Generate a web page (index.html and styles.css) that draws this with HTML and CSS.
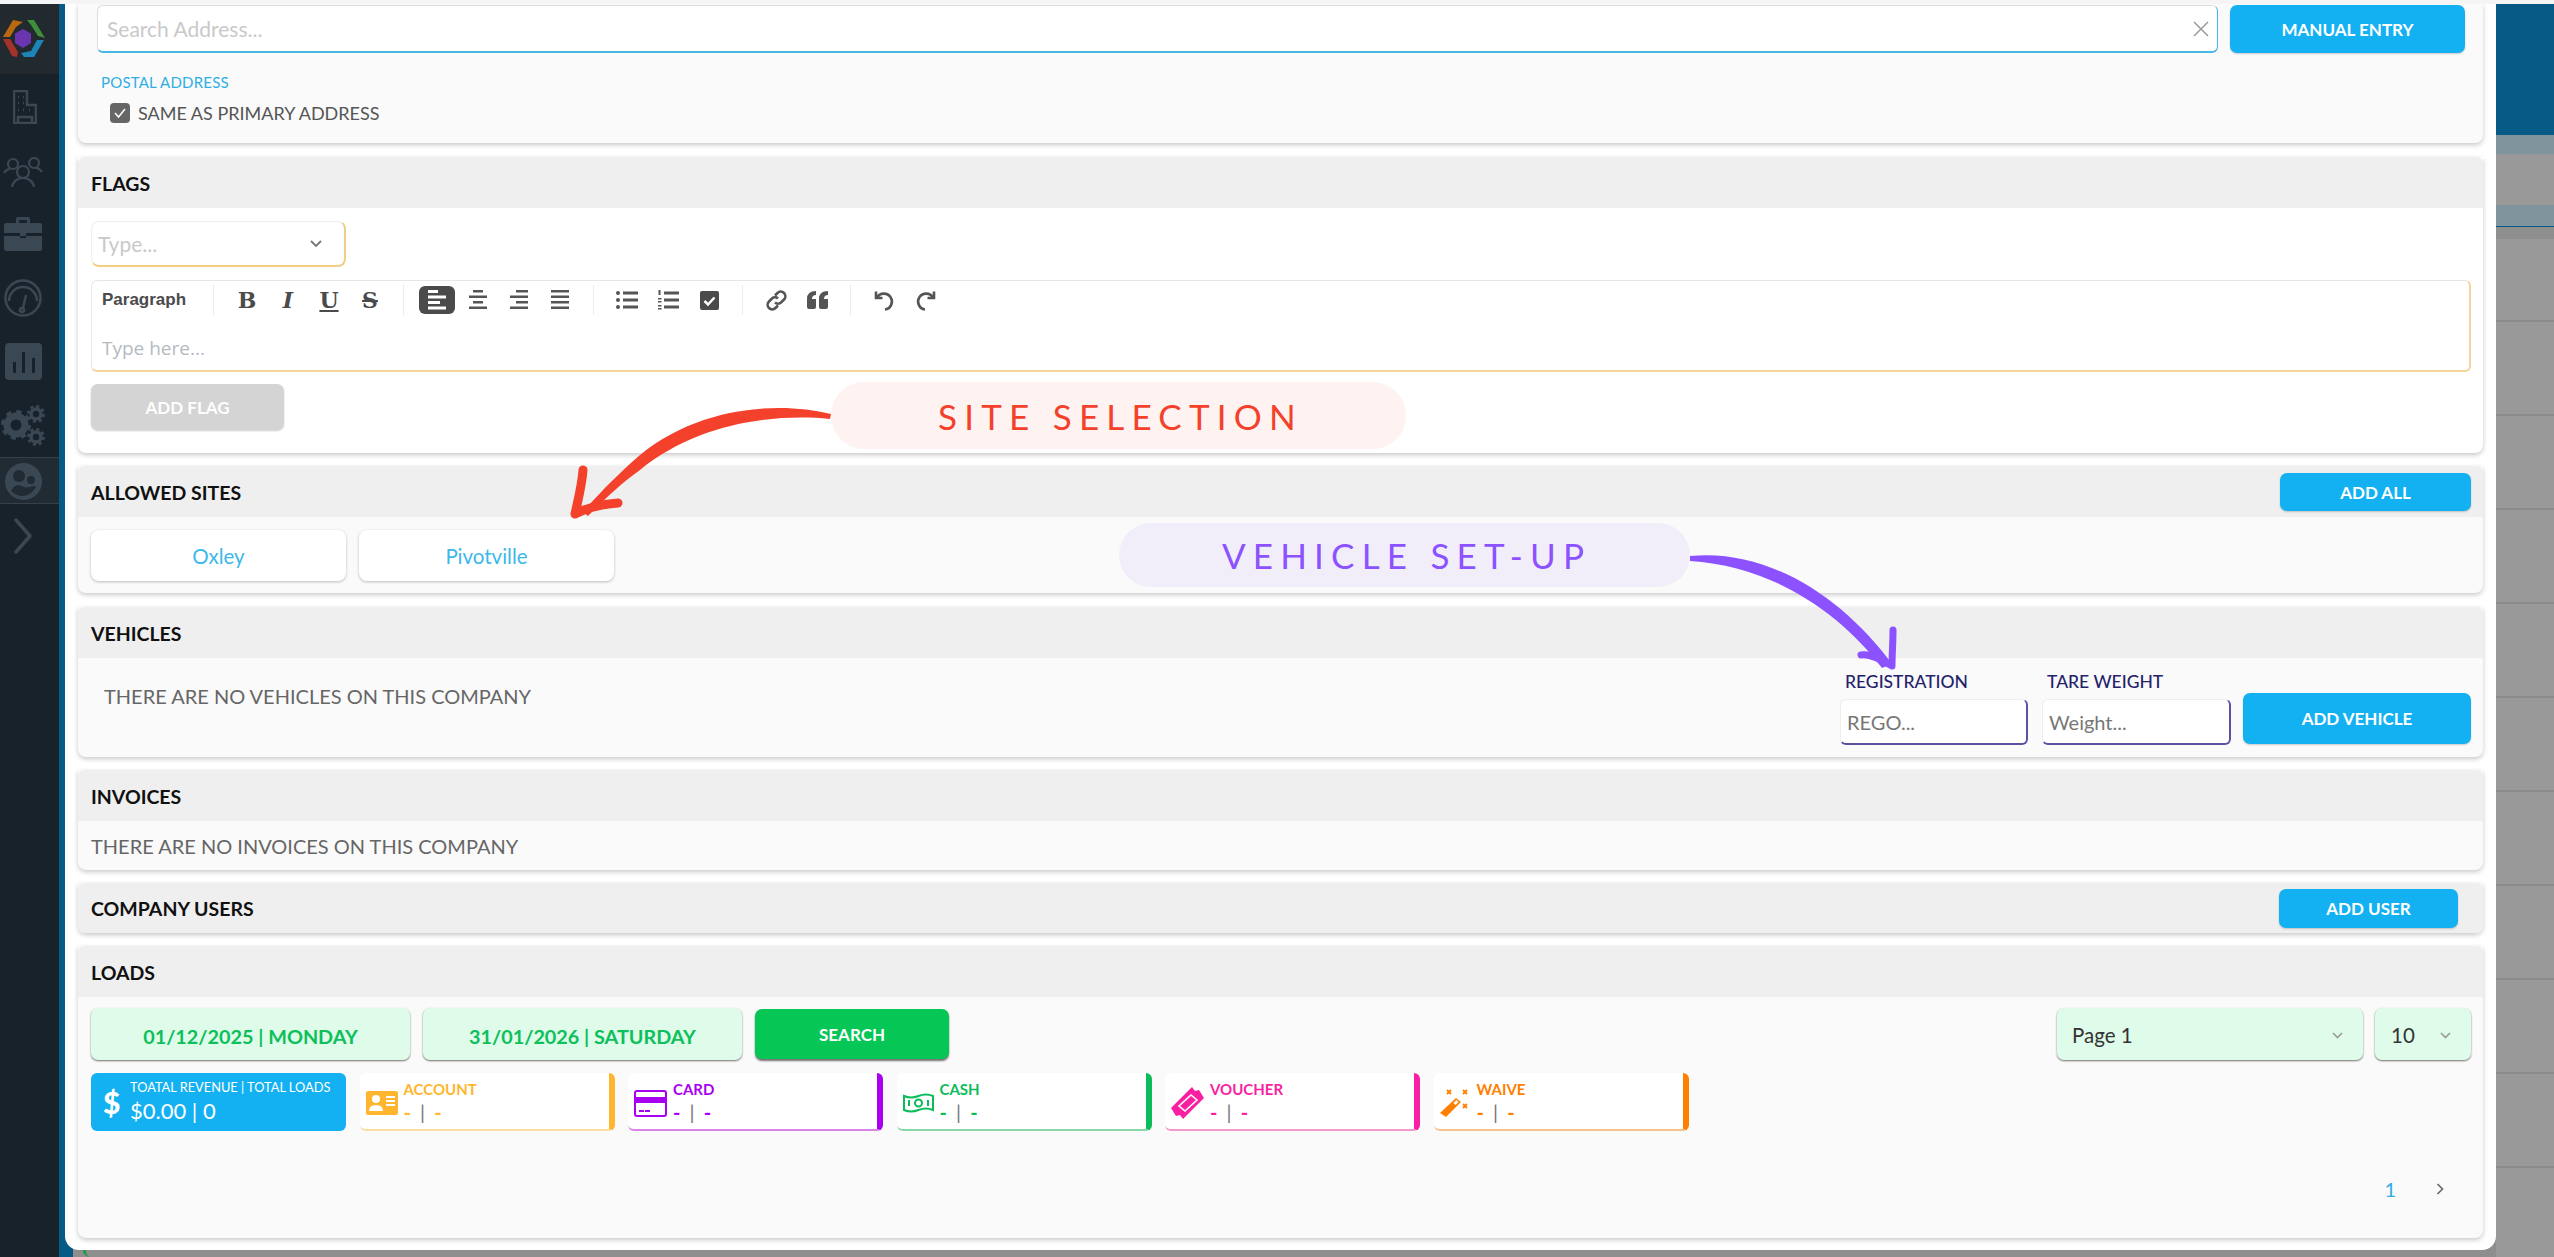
FILE: index.html
```html
<!DOCTYPE html>
<html lang="en">
<head>
  <meta charset="UTF-8" />
  <meta name="viewport" content="width=device-width, initial-scale=1.0"/>
  <title>Company</title>
  <link rel="stylesheet" href="styles.css">
</head>
<body>
  <div class="top-strip"></div>
  <div class="stage">
    <nav class="sidebar">
      <div class="nav-logo">
        <svg width="46" height="40" viewBox="0 0 46 40">
          <polygon points="3,18 13,1 23,3 16,8 10,18" fill="#b8690f"/>
          <polygon points="27,1 34,1 45,19 38,17 31,6" fill="#3f8f3a"/>
          <polygon points="44,21 34,38 24,38 21,34 31,32 37,21" fill="#1c85b5"/>
          <polygon points="3,20 10,20 18,33 17,38 12,37" fill="#a3322a"/>
          <polygon points="23,10 31,14.500 31,24 23,29 15,24 15,14.500" fill="#6b35b0"/>
        </svg>
      </div>
      <div class="nav-item nav-building">
        <svg width="24" height="34" viewBox="0 0 24 34" fill="none" stroke="#3a4854" stroke-width="2.500">
          <path d="M1 33V1h13v14h9v18z"/><path d="M5 33v-6h14v6M5 7h1M10 7h1M5 13h1M10 13h1M5 20h1M10 20h1M16 20h1"/>
        </svg>
      </div>
      <div class="nav-item nav-users">
        <svg width="40" height="30" viewBox="0 0 40 30" fill="none" stroke="#3a4854" stroke-width="2.200">
          <circle cx="10" cy="7" r="5"/><circle cx="31" cy="6" r="5"/><circle cx="20" cy="15" r="6"/>
          <path d="M1 16c2-3 4-4 6-4M39 15c-2-3-4-4-6-4M9 30c1-6 6-9 11-9s10 3 11 9"/>
        </svg>
      </div>
      <div class="nav-item nav-case">
        <svg width="38" height="35" viewBox="0 0 38 35">
          <path d="M12 7V3q0-2 2-2h10q2 0 2 2v4h-3V4h-8v3z" fill="#3a4854"/>
          <path d="M2 7h34q2 0 2 2v8H22v3h-6v-3H0V9q0-2 2-2zM0 20h16v2h6v-2h16v13q0 2-2 2H2q-2 0-2-2z" fill="#3a4854"/>
        </svg>
      </div>
      <div class="nav-item nav-gauge">
        <svg width="38" height="38" viewBox="0 0 38 38" fill="none" stroke="#3a4854" stroke-width="2.500">
          <circle cx="19" cy="19" r="17.500"/><path d="M5 22a14 14 0 0 1 28 0"/><path d="M22 16l-3 13"/><circle cx="18" cy="31" r="2"/>
        </svg>
      </div>
      <div class="nav-item nav-chart">
        <svg width="37" height="37" viewBox="0 0 37 37">
          <path fill-rule="evenodd" d="M4 0h29q4 0 4 4v29q0 4-4 4H4q-4 0-4-4V4q0-4 4-4zM8 19v11h3V19zM17 9v21h3V9zM27 15v15h3V15z" fill="#3a4854"/>
        </svg>
      </div>
      <div class="nav-item nav-gears">
        <svg width="44" height="41" viewBox="0 0 44 41" fill="none" stroke="#3a4854">
          <circle cx="15" cy="20" r="9" stroke-width="7"/>
          <circle cx="15" cy="20" r="13" stroke-width="4" stroke-dasharray="5 5.200"/>
          <circle cx="35" cy="9" r="5" stroke-width="3.500"/>
          <circle cx="35" cy="9" r="7.500" stroke-width="3" stroke-dasharray="3 2.900"/>
          <circle cx="35" cy="32" r="5" stroke-width="3.500"/>
          <circle cx="35" cy="32" r="7.500" stroke-width="3" stroke-dasharray="3 2.900"/>
        </svg>
      </div>
      <div class="nav-item nav-face">
        <svg width="37" height="37" viewBox="0 0 37 37">
          <circle cx="18.500" cy="18.500" r="18.500" fill="#3a4854"/>
          <circle cx="14" cy="13" r="6" fill="#202b33"/><circle cx="26" cy="17" r="4" fill="#202b33"/>
          <path d="M6 28c4-8 9-6 13-4 5 2 8-3 12 0-3 5-8 9-13 9-5 0-9-2-12-5z" fill="#202b33"/>
        </svg>
      </div>
      <div class="nav-item nav-more">
        <svg width="18" height="36" viewBox="0 0 18 36" fill="none" stroke="#3a4854" stroke-width="3.500" stroke-linecap="round" stroke-linejoin="round">
          <path d="M2 2l14 16L2 34"/>
        </svg>
      </div>
    </nav>
    <div class="rail"></div>

    <main class="modal">
      <section class="card card-address">
        <div class="address-row">
          <div class="search-box">
            <span class="placeholder">Search Address...</span>
            <svg width="16" height="16" viewBox="0 0 16 16" stroke="#9b9b9b" stroke-width="1.500"><path d="M1 1l14 14M15 1L1 15"/></svg>
          </div>
          <button class="btn btn-manual">MANUAL ENTRY</button>
        </div>
        <div class="postal-label">POSTAL ADDRESS</div>
        <label class="same-row">
          <span class="checkbox"><svg width="14" height="14" viewBox="0 0 14 14" fill="none" stroke="#fff" stroke-width="1.500"><path d="M2 7l3.500 4L12 3"/></svg></span>
          SAME AS PRIMARY ADDRESS
        </label>
      </section>

      <section class="card card-flags">
        <header class="card-head">FLAGS</header>
        <div class="flags-body">
          <div class="select-type">
            <span class="placeholder">Type...</span>
            <svg width="12" height="8" viewBox="0 0 12 8" fill="none" stroke="#777" stroke-width="1.800"><path d="M1 1l5 5 5-5"/></svg>
          </div>
          <div class="editor">
            <div class="toolbar">
              <span class="para">Paragraph</span>
              <i class="sep"></i>
              <span class="tool glyph-b">B</span>
              <span class="tool glyph-i">I</span>
              <span class="tool glyph-u">U</span>
              <span class="tool glyph-s">S</span>
              <i class="sep"></i>
              <span class="tool tool-on"><svg width="20" height="20" viewBox="0 0 20 20" fill="#fff"><rect x="1" width="10" height="3"/><rect x="1" y="5.500" width="18" height="3"/><rect x="1" y="11" width="12" height="3"/><rect x="1" y="16.500" width="18" height="3"/></svg></span>
              <span class="tool"><svg width="20" height="20" viewBox="0 0 20 20" fill="#555"><rect x="5" width="10" height="2.500"/><rect x="1" y="5.500" width="18" height="2.500"/><rect x="5" y="11" width="10" height="2.500"/><rect x="1" y="16.500" width="18" height="2.500"/></svg></span>
              <span class="tool"><svg width="20" height="20" viewBox="0 0 20 20" fill="#555"><rect x="7" width="12" height="2.500"/><rect x="1" y="5.500" width="18" height="2.500"/><rect x="7" y="11" width="12" height="2.500"/><rect x="1" y="16.500" width="18" height="2.500"/></svg></span>
              <span class="tool"><svg width="20" height="20" viewBox="0 0 20 20" fill="#555"><rect x="1" width="18" height="2.500"/><rect x="1" y="5.500" width="18" height="2.500"/><rect x="1" y="11" width="18" height="2.500"/><rect x="1" y="16.500" width="18" height="2.500"/></svg></span>
              <i class="sep"></i>
              <span class="tool"><svg width="22" height="20" viewBox="0 0 22 20" fill="#555"><circle cx="2" cy="3" r="2"/><circle cx="2" cy="10" r="2"/><circle cx="2" cy="17" r="2"/><rect x="7" y="1.500" width="15" height="3"/><rect x="7" y="8.500" width="15" height="3"/><rect x="7" y="15.500" width="15" height="3"/></svg></span>
              <span class="tool"><svg width="22" height="20" viewBox="0 0 22 20" fill="#555"><rect x="1.500" y="0" width="2" height="5"/><rect x="1" y="8" width="3.500" height="1.500"/><rect x="1" y="11" width="3.500" height="1.500"/><rect x="1" y="15" width="3.500" height="1.500"/><rect x="1" y="18" width="3.500" height="1.500"/><rect x="7" y="1.500" width="15" height="3"/><rect x="7" y="8.500" width="15" height="3"/><rect x="7" y="15.500" width="15" height="3"/></svg></span>
              <span class="tool"><svg width="19" height="19" viewBox="0 0 19 19"><rect width="19" height="19" rx="2" fill="#4b4b4b"/><path d="M4.500 10l3.500 3.500 6.500-7" fill="none" stroke="#fff" stroke-width="2.500"/></svg></span>
              <i class="sep"></i>
              <span class="tool"><svg width="21" height="21" viewBox="0 0 21 21" fill="none" stroke="#555" stroke-width="2.600"><path d="M9 5.500l2.500-2.500a4.500 4.500 0 0 1 6.500 6.500l-3 3a4.500 4.500 0 0 1-6 0"/><path d="M12 15.500L9.500 18A4.500 4.500 0 0 1 3 11.500l3-3a4.500 4.500 0 0 1 6 0"/></svg></span>
              <span class="tool"><svg width="21" height="18" viewBox="0 0 21 18" fill="#555"><path d="M9 0v4Q5 4 5 8h4v8q0 2-2 2H2q-2 0-2-2V8Q0 0 9 0zM21 0v4q-4 0-4 4h4v8q0 2-2 2h-5q-2 0-2-2V8q0-8 9-8z"/></svg></span>
              <i class="sep"></i>
              <span class="tool"><svg width="21" height="21" viewBox="0 0 21 21" fill="none" stroke="#555" stroke-width="2.600"><path d="M2 1.500V8h6.500"/><path d="M3 7.500A8 8 0 1 1 11 19.500"/></svg></span>
              <span class="tool"><svg width="21" height="21" viewBox="0 0 21 21" fill="none" stroke="#555" stroke-width="2.600"><path d="M19 1.500V8h-6.500"/><path d="M18 7.500A8 8 0 1 0 10 19.500"/></svg></span>
            </div>
            <div class="editor-text">Type here...</div>
          </div>
          <button class="btn btn-flag">ADD FLAG</button>
        </div>
      </section>

      <section class="card card-sites">
        <header class="card-head">ALLOWED SITES <button class="btn btn-head">ADD ALL</button></header>
        <div class="sites-body">
          <button class="site">Oxley</button>
          <button class="site">Pivotville</button>
        </div>
      </section>

      <section class="card card-vehicles">
        <header class="card-head">VEHICLES</header>
        <div class="vehicles-body">
          <p class="empty empty-vehicles">THERE ARE NO VEHICLES ON THIS COMPANY</p>
          <div class="vehicle-form">
            <div class="field">
              <label>REGISTRATION</label>
              <div class="input">REGO...</div>
            </div>
            <div class="field">
              <label>TARE WEIGHT</label>
              <div class="input">Weight...</div>
            </div>
            <button class="btn btn-vehicle">ADD VEHICLE</button>
          </div>
        </div>
      </section>

      <section class="card card-invoices">
        <header class="card-head">INVOICES</header>
        <p class="empty empty-invoices">THERE ARE NO INVOICES ON THIS COMPANY</p>
      </section>

      <section class="card card-users">
        <header class="card-head">COMPANY USERS <button class="btn btn-head btn-user">ADD USER</button></header>
      </section>

      <section class="card card-loads">
        <header class="card-head">LOADS</header>
        <div class="loads-body">
          <div class="loads-tools">
            <div class="date">01/12/2025 | MONDAY</div>
            <div class="date">31/01/2026 | SATURDAY</div>
            <button class="btn-search">SEARCH</button>
            <div class="pick pick-page">Page 1 <svg width="11" height="7" viewBox="0 0 11 7" fill="none" stroke="#999" stroke-width="1.600"><path d="M1 1l4.500 4.500L10 1"/></svg></div>
            <div class="pick pick-size">10 <svg width="11" height="7" viewBox="0 0 11 7" fill="none" stroke="#999" stroke-width="1.600"><path d="M1 1l4.500 4.500L10 1"/></svg></div>
          </div>
          <div class="stats">
            <div class="stat stat-total">
              <span class="dollar">$</span>
              <div>
                <div class="stat-label">TOATAL REVENUE | TOTAL LOADS</div>
                <div class="stat-value">$0.00 | 0</div>
              </div>
            </div>
            <div class="stat stat-account">
              <svg width="32" height="24" viewBox="0 0 32 24"><rect width="32" height="24" rx="2" fill="#ffb52e"/><circle cx="10" cy="8" r="4" fill="#fff"/><path d="M3 20q0-6 7-6t7 6z" fill="#fff"/><rect x="20" y="5" width="9" height="2" fill="#fff"/><rect x="20" y="9" width="9" height="2" fill="#fff"/><rect x="20" y="13" width="9" height="2" fill="#fff"/></svg>
              <div><div class="stat-name">ACCOUNT</div><div class="stat-dash"><b>-</b> | <b>-</b></div></div>
            </div>
            <div class="stat stat-card">
              <svg width="33" height="27" viewBox="0 0 33 27"><rect x="1" y="1" width="31" height="25" rx="2" fill="none" stroke="#a800f0" stroke-width="2"/><rect x="1" y="7" width="31" height="6" fill="#a800f0"/><rect x="5" y="20" width="5" height="2" fill="#a800f0"/><rect x="11" y="20" width="5" height="2" fill="#a800f0"/></svg>
              <div><div class="stat-name">CARD</div><div class="stat-dash"><b>-</b> | <b>-</b></div></div>
            </div>
            <div class="stat stat-cash">
              <svg width="31" height="20" viewBox="0 0 31 20" fill="none" stroke="#0bbd5a" stroke-width="2"><path d="M1 3q7 3 14.500 0T30 3v14q-7-3-14.500 0T1 17z"/><circle cx="15.500" cy="10" r="3.500"/><path d="M6 7v6M25 7v6"/></svg>
              <div><div class="stat-name">CASH</div><div class="stat-dash"><b>-</b> | <b>-</b></div></div>
            </div>
            <div class="stat stat-voucher">
              <svg width="33" height="32" viewBox="0 0 33 32"><path d="M21 0l3 4 4-1 5 8-3 3L12 32l-3-4-4 1-5-8 3-3z" fill="#f91fa2"/><path d="M20 8l6 5-12 11-6-5z" fill="#f91fa2" stroke="#fff" stroke-width="1.600"/></svg>
              <div><div class="stat-name">VOUCHER</div><div class="stat-dash"><b>-</b> | <b>-</b></div></div>
            </div>
            <div class="stat stat-waive">
              <svg width="29" height="28" viewBox="0 0 29 28"><path d="M16 9l5 4L6 28 0 24z" fill="#ff7f00"/><path d="M16.500 11l2 2-3 3-2-2z" fill="#fff"/><path d="M7 1l4 4M11 1L7 5M23 1l4 4M27 1l-4 4M23 15l4 4M27 15l-4 4" stroke="#ff7f00" stroke-width="1.800"/></svg>
              <div><div class="stat-name">WAIVE</div><div class="stat-dash"><b>-</b> | <b>-</b></div></div>
            </div>
          </div>
          <div class="pager">
            <span class="pager-num">1</span>
            <svg width="8" height="12" viewBox="0 0 8 12" fill="none" stroke="#666" stroke-width="1.600"><path d="M1.500 1l5 5-5 5"/></svg>
          </div>
        </div>
      </section>
    </main>

    <aside class="backdrop">
      <div class="back-blue"></div>
      <div class="back-tint"></div>
      <div class="back-grey"></div>
      <div class="back-tab"></div>
      <div class="back-shade"></div>
      <div class="back-rows"></div>
    </aside>
  </div>
  <div class="peek"></div>

  <!-- annotations drawn over the screenshot -->
  <div class="note note-site">SITE SELECTION</div>
  <div class="note note-vehicle">VEHICLE SET-UP</div>
  <svg class="arrows" width="2554" height="1257" viewBox="0 0 2554 1257">
    <path d="M831 414C775 400 690 408 632 462C610 482 595 498 583 512L588 516C602 502 620 484 640 470C695 425 770 413 830 419z" fill="#f4412b"/>
    <path d="M583 470C582 485 578 500 575 514C590 506 605 504 618 503" fill="none" stroke="#f4412b" stroke-width="9" stroke-linecap="round" stroke-linejoin="round"/>
    <path d="M1690 556C1770 548 1845 600 1892 664L1882 668C1838 610 1770 566 1690 561z" fill="#8c52ff"/>
    <path d="M1893 630C1893 643 1892 655 1892 666C1882 660 1870 653 1861 655" fill="none" stroke="#8c52ff" stroke-width="7" stroke-linecap="round" stroke-linejoin="round"/>
  </svg>
</body>
</html>
```
FILE: styles.css
```css
* {
  box-sizing: border-box;
}
html, body {
  margin: 0;
  height: 100%;
  overflow: hidden;
}
body {
  position: relative;
  font-family: Lato, "Noto Sans", sans-serif;
  font-size: 20px;
  background: #8e8e8e;
  color: #111;
}
button {
  font-family: inherit;
  border: none;
}
p {
  margin: 0;
}
.top-strip {
  height: 4px;
  background: #f5f5f5;
}
.stage {
  display: flex;
  height: 1253px;
}

/* sidebar */
.sidebar {
  width: 59px;
  flex-shrink: 0;
  background: #18222b;
  display: flex;
  flex-direction: column;
}
.nav-logo {
  height: 70px;
  background: #22292f;
  padding: 15px 0 0 0;
}
.nav-logo svg {
  display: block;
}
.nav-item {
  width: 46px;
  display: flex;
  justify-content: center;
}
.nav-item svg {
  display: block;
}
.nav-building { margin-top: 16px; padding-left: 4px; }
.nav-users { margin-top: 33px; }
.nav-case { margin-top: 29px; }
.nav-gauge { margin-top: 28px; }
.nav-chart { margin-top: 26px; }
.nav-gears { margin-top: 25px; }
.nav-face {
  width: 59px;
  height: 47px;
  margin-top: 11px;
  padding: 5px 13px 0 0;
  background: #202b33;
  border-top: 1px solid #35404a;
  border-bottom: 1px solid #35404a;
}
.nav-more { margin-top: 14px; }
.rail {
  position: relative;
  width: 6px;
  flex-shrink: 0;
  background: #065a85;
}
/* the rail runs on behind the modal's round corner */
.rail::after {
  content: "";
  position: absolute;
  left: 6px;
  bottom: 0;
  width: 8px;
  height: 24px;
  background: #065a85;
  z-index: -1;
}
.peek {
  position: absolute;
  left: 83px;
  top: 1250px;
  width: 8px;
  height: 7px;
  border-left: 3px solid #1c9a4a;
  border-radius: 0 0 0 8px;
}

/* modal */
.modal {
  width: 2431px;
  height: 1246px;
  flex-shrink: 0;
  background: #fff;
  border-radius: 0 0 14px 14px;
  padding: 0 13px;
  display: flex;
  flex-direction: column;
  gap: 13px;
  overflow: hidden;
}
.card {
  flex-shrink: 0;
  background: #fafafa;
  border-radius: 0 0 8px 8px;
  box-shadow: 0 2px 5px rgba(0, 0, 0, 0.22);
}
.card-head {
  height: 51px;
  padding: 1px 12px 0 13px;
  display: flex;
  align-items: center;
  justify-content: space-between;
  background: #efefef;
  font-size: 19.500px;
  font-weight: 700;
  border-radius: 6px 6px 0 0;
}
.btn {
  background: #14b1f2;
  color: #fff;
  font-size: 17px;
  font-weight: 700;
  border-radius: 7px;
  box-shadow: 0 1px 2px rgba(0, 0, 0, 0.2);
}
.placeholder {
  color: #c9c9c9;
}

.card-address {
  height: 139px;
  padding: 1px 18px 0 19px;
}
.address-row {
  display: flex;
  gap: 12px;
}
.search-box {
  flex: 1;
  height: 48px;
  padding: 0 8px 0 9px;
  display: flex;
  align-items: center;
  justify-content: space-between;
  background: #fff;
  border: 1px solid #ddd;
  border-bottom: 2px solid #47b7e6;
  border-right-color: #47b7e6;
  border-radius: 6px;
  font-size: 21px;
}
.btn-manual {
  width: 235px;
  height: 48px;
}
.postal-label {
  margin: 19px 0 0 4px;
  color: #30aee2;
  font-size: 15px;
  letter-spacing: 0.2px;
  line-height: 20px;
}
.same-row {
  display: flex;
  align-items: center;
  gap: 8px;
  margin: 10px 0 0 13px;
  color: #555;
  font-size: 18px;
}
.checkbox {
  width: 20px;
  height: 20px;
  display: flex;
  align-items: center;
  justify-content: center;
  background: #666;
  border-radius: 4px;
}

.card-flags {
  height: 296px;
  margin-top: 1px;
  background: #fff;
}
.flags-body {
  padding: 13px 12px 0 13px;
}
.select-type {
  width: 255px;
  height: 46px;
  padding: 0 22px 0 6px;
  display: flex;
  align-items: center;
  justify-content: space-between;
  background: #fff;
  border: 1px solid #eee;
  border-bottom: 2px solid #f2cd84;
  border-right: 2px solid #f2cd84;
  border-radius: 8px;
  font-size: 21px;
}
.editor {
  height: 92px;
  margin-top: 13px;
  background: #fff;
  border: 1px solid #e6e6e6;
  border-bottom: 2px solid #f2d49c;
  border-right: 2px solid #f2d49c;
  border-radius: 6px;
}
.toolbar {
  display: flex;
  align-items: center;
  gap: 5px;
  height: 36px;
  margin-top: 1px;
  padding-left: 10px;
  color: #4b4b4b;
}
.para {
  width: 96px;
  font-family: "Liberation Sans", Arial, sans-serif;
  font-size: 17px;
  font-weight: 700;
}
.sep {
  width: 1px;
  height: 30px;
  margin: 0 10px;
  background: #ececec;
}
.tool {
  width: 36px;
  height: 28px;
  display: flex;
  align-items: center;
  justify-content: center;
  border-radius: 6px;
  font-family: "DejaVu Serif", serif;
  font-size: 22px;
  font-weight: 700;
  line-height: 1;
}
.tool-on {
  background: #4b4b4b;
}
.glyph-i {
  font-style: italic;
}
.glyph-u {
  text-decoration: underline;
}
.glyph-s {
  text-decoration: line-through;
}
.editor-text {
  margin: 17px 0 0 10px;
  color: #b5bac0;
  font-family: "Open Sans", sans-serif;
  font-size: 19px;
}
.btn-flag {
  display: block;
  width: 193px;
  height: 46px;
  margin-top: 12px;
  background: #d4d4d4;
  font-size: 17px;
}

.card-sites {
  height: 127px;
}
.btn-head {
  width: 191px;
  height: 38px;
}
.btn-user {
  width: 179px;
  height: 39px;
  margin-right: 13px;
}
.sites-body {
  display: flex;
  gap: 13px;
  padding: 13px 12px 0 13px;
}
.site {
  width: 255px;
  height: 51px;
  background: #fff;
  color: #3cb8ea;
  font-size: 20.500px;
  border-radius: 8px;
  box-shadow: 0 1px 3px rgba(0, 0, 0, 0.25);
}

.card-vehicles {
  height: 150px;
  margin-top: 1px;
}
.vehicles-body {
  display: flex;
  justify-content: space-between;
  padding: 14px 12px 0 13px;
}
.empty {
  color: #666;
  font-size: 20px;
  line-height: 24px;
}
.empty-vehicles {
  margin: 12px 0 0 13px;
}
.vehicle-form {
  display: flex;
  gap: 14px;
}
.field {
  width: 188px;
}
.field + .field {
  width: 189px;
}
.field label {
  display: block;
  padding-left: 5px;
  color: #25226b;
  font-size: 17.500px;
  font-weight: 500;
  line-height: 20px;
  margin-bottom: 7px;
}
.input {
  height: 46px;
  padding-left: 6px;
  display: flex;
  align-items: center;
  background: #fff;
  border: 1px solid #eee;
  border-bottom: 2px solid #5a52a0;
  border-right: 2px solid #5a52a0;
  border-radius: 6px;
  color: #777;
  font-size: 20px;
}
.btn-vehicle {
  width: 228px;
  height: 51px;
  margin: 21px 0 0 -2px;
}

.card-invoices {
  height: 100px;
}
.empty-invoices {
  margin: 13px 0 0 13px;
}
.card-users {
  height: 50px;
}
.card-users .card-head {
  height: 50px;
  border-radius: 6px;
}

.card-loads {
  height: 292px;
}
.loads-body {
  padding: 11px 12px 0 13px;
}
.loads-tools {
  display: flex;
  gap: 13px;
}
.date {
  width: 319px;
  height: 52px;
  padding-top: 3px;
  display: flex;
  align-items: center;
  justify-content: center;
  background: #dffbea;
  color: #0cc05a;
  font-size: 19.800px;
  font-weight: 700;
  border-radius: 7px;
  box-shadow: 0 1px 2px rgba(0, 0, 0, 0.55);
}
.btn-search {
  width: 194px;
  height: 50px;
  margin-top: 1px;
  background: #06c655;
  color: #fff;
  font-size: 17px;
  font-weight: 700;
  border-radius: 7px;
  box-shadow: 0 2px 2px rgba(0, 0, 0, 0.55);
}
.pick {
  height: 52px;
  padding-top: 2px;
  display: flex;
  align-items: center;
  justify-content: space-between;
  background: #dffbea;
  color: #333;
  font-size: 20.500px;
  border-radius: 7px;
  box-shadow: 0 1px 2px rgba(0, 0, 0, 0.55);
}
.pick-page {
  width: 306px;
  margin-left: auto;
  padding-left: 15px;
  padding-right: 20px;
}
.pick-size {
  width: 96px;
  margin-left: -1px;
  padding-left: 16px;
  padding-right: 20px;
}
.stats {
  display: flex;
  gap: 13.500px;
  margin-top: 13px;
}
.stat {
  width: 255px;
  height: 58px;
  display: flex;
  align-items: center;
  gap: 6px;
  padding: 4px 0 0 6px;
  background: #fff;
  border-radius: 6px;
  border-right: 6px solid;
  border-bottom: 2px solid;
}
.stat-total {
  gap: 10px;
  padding: 0 0 0 12px;
  background: #14b1f2;
  color: #fff;
  border: none;
}
.dollar {
  width: 17px;
  font-size: 30px;
  font-weight: 900;
}
.stat-label {
  font-size: 12.800px;
  line-height: 18px;
  white-space: nowrap;
}
.stat-value {
  font-size: 22px;
  line-height: 30px;
}
.stat-name {
  font-size: 15px;
  font-weight: 700;
  line-height: 18px;
}
.stat-dash {
  color: #777;
  font-size: 20px;
  line-height: 28px;
  word-spacing: 4px;
}
.stat-dash b {
  font-weight: 700;
}
.stat-waive {
  gap: 8px;
}
.stat-account { border-color: #ffb52e; border-bottom-color: #fbdf9f; }
.stat-account .stat-name, .stat-account b { color: #ffb52e; }
.stat-card { border-color: #a800f0; border-bottom-color: #d884e6; }
.stat-card .stat-name, .stat-card b { color: #a800f0; }
.stat-cash { border-color: #0bbd5a; border-bottom-color: #86d9a6; }
.stat-cash .stat-name, .stat-cash b { color: #0bbd5a; }
.stat-voucher { border-color: #f91fa2; border-bottom-color: #f09ad0; }
.stat-voucher .stat-name, .stat-voucher b { color: #f91fa2; }
.stat-waive { border-color: #ff7f00; border-bottom-color: #f5c488; }
.stat-waive .stat-name, .stat-waive b { color: #ff7f00; }
.pager {
  display: flex;
  align-items: center;
  justify-content: flex-end;
  gap: 40px;
  height: 26px;
  margin-top: 45px;
  padding-right: 27px;
}
.pager-num {
  color: #2faee4;
  font-size: 20px;
}

/* what shows behind the modal */
.backdrop {
  flex: 1;
  display: flex;
  flex-direction: column;
  background: #999;
}
.back-blue { height: 131px; background: #065a85; }
.back-tint { height: 19px; background: #7f949c; }
.back-grey { height: 51px; background: #999; }
.back-tab {
  height: 22px;
  background: #7f949c;
  border-bottom: 1px solid #065a85;
}
.back-shade { height: 12px; background: #8f8f8f; }
.back-rows {
  flex: 1;
  background: linear-gradient(to bottom, #999 92px, #8b8b8b 92px) 0 -11px / 100% 94px repeat-y;
}

/* annotations */
.note {
  position: absolute;
  display: flex;
  align-items: center;
  justify-content: center;
  border-radius: 33px;
  padding-left: 4px;
  font-size: 35px;
  letter-spacing: 7.200px;
}
.note-site {
  left: 831px;
  top: 382px;
  width: 575px;
  height: 67px;
  background: #fff3f1;
  color: #f4412b;
}
.note-vehicle {
  left: 1119px;
  top: 523px;
  width: 571px;
  height: 64px;
  background: #f1eefa;
  color: #8c52ff;
}
.arrows {
  position: absolute;
  left: 0;
  top: 0;
  pointer-events: none;
}
```
